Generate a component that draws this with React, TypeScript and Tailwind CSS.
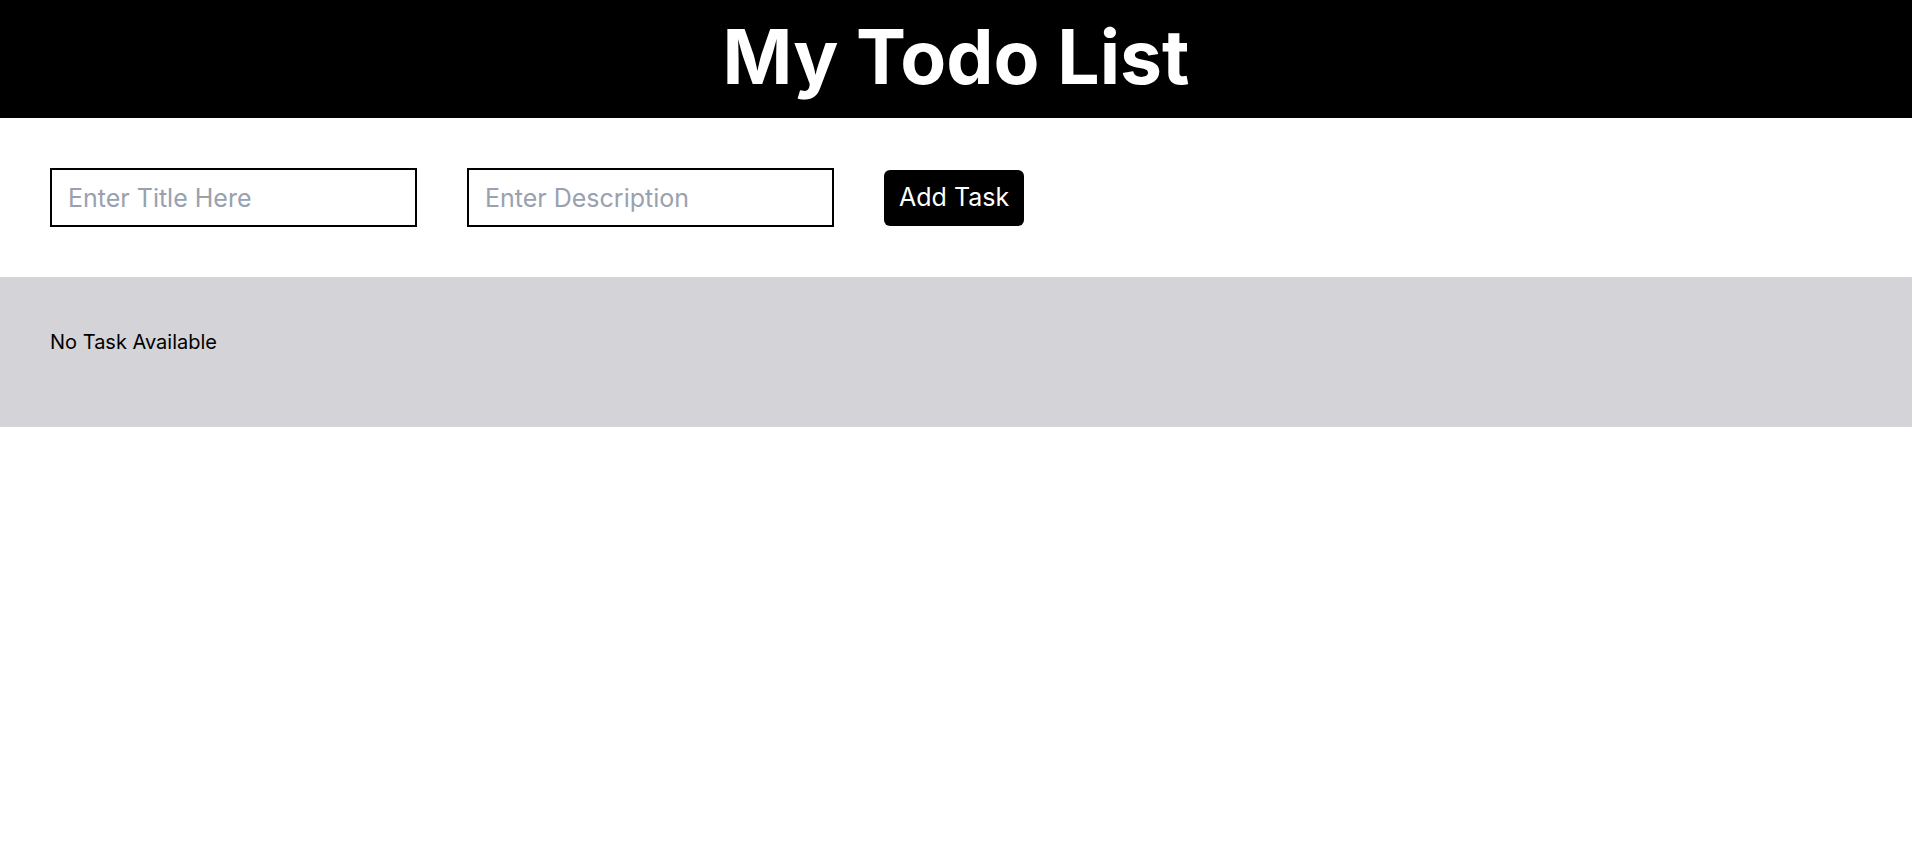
import React, { useState } from 'react';

interface Task {
  title: string;
  desc: string;
}

export default function App() {
  const [title, setTitle] = useState('');
  const [desc, setDesc] = useState('');
  const [tasks, setTasks] = useState<Task[]>([]);

  const addTask = (e: React.FormEvent) => {
    e.preventDefault();
    if (!title.trim()) return;
    setTasks([...tasks, { title, desc }]);
    setTitle('');
    setDesc('');
  };

  return (
    <div className="min-h-screen bg-white font-['Inter',sans-serif] text-black">
      <h1 className="bg-black text-white text-center font-bold text-[75px] leading-none h-[118px] pt-[19px]">
        My Todo List
      </h1>

      {/* Add form */}
      <form onSubmit={addTask} className="flex items-center gap-[50px] p-[50px]">
        <input
          type="text"
          value={title}
          onChange={(e) => setTitle(e.target.value)}
          placeholder="Enter Title Here"
          className="w-[367px] h-[59px] border-2 border-black px-4 text-[25px] outline-none placeholder:text-gray-400"
        />
        <input
          type="text"
          value={desc}
          onChange={(e) => setDesc(e.target.value)}
          placeholder="Enter Description"
          className="w-[367px] h-[59px] border-2 border-black px-4 text-[25px] outline-none placeholder:text-gray-400"
        />
        <button type="submit" className="bg-black text-white text-[25px] px-[15px] h-[56px] rounded-md">
          Add Task
        </button>
      </form>

      <div className="bg-zinc-300 h-[150px] px-[50px] pt-[51px]">
        {tasks.length === 0 ? (
          <p className="text-xl">No Task Available</p>
        ) : (
          tasks.map((t, i) => (
            <div key={i} className="flex gap-4 text-xl">
              <span className="font-bold">{t.title}</span>
              <span>{t.desc}</span>
            </div>
          ))
        )}
      </div>
    </div>
  );
}
